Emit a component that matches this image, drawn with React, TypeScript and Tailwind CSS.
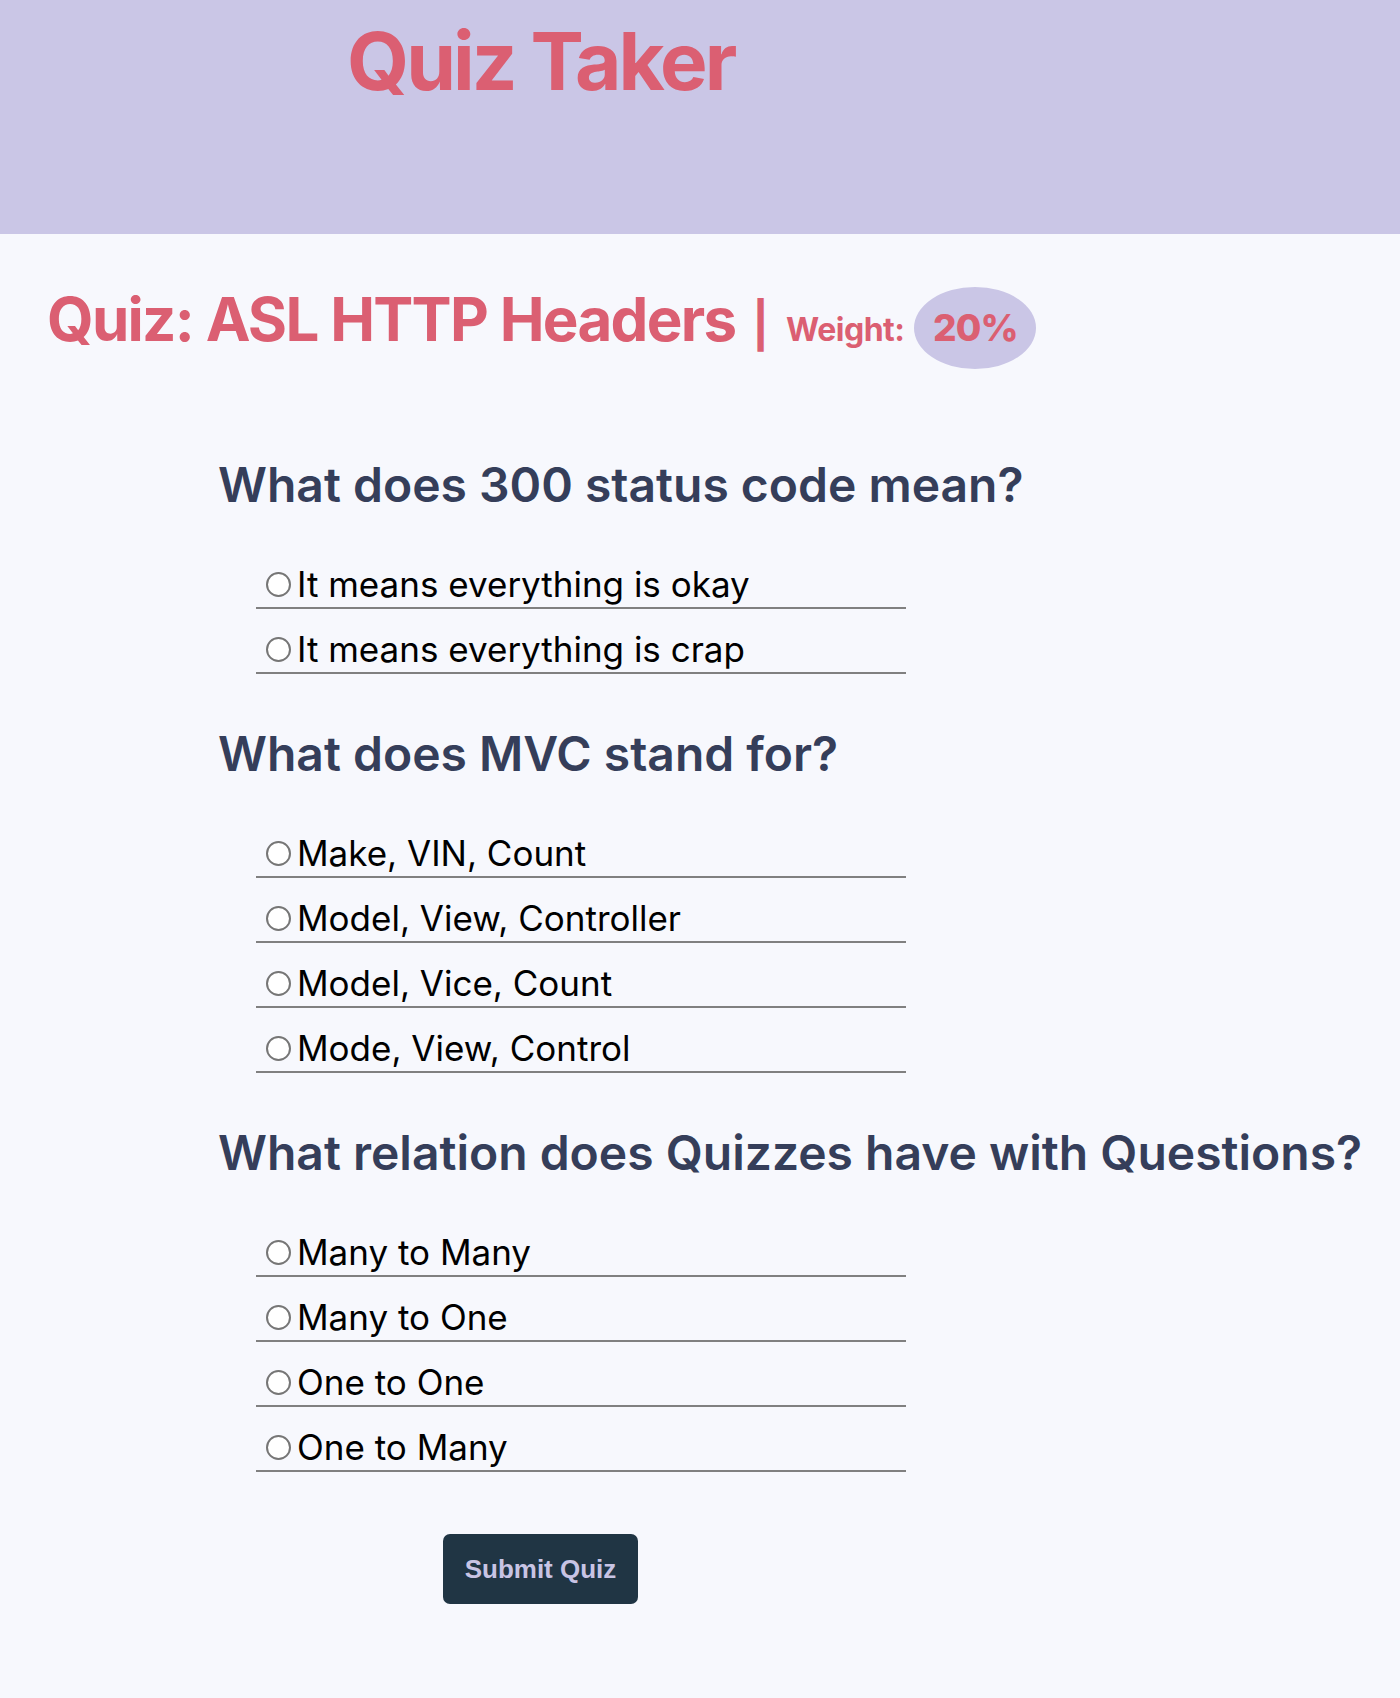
import React from "react";

const questions = [
  {
    q: "What does 300 status code mean?",
    options: ["It means everything is okay", "It means everything is crap"],
  },
  {
    q: "What does MVC stand for?",
    options: [
      "Make, VIN, Count",
      "Model, View, Controller",
      "Model, Vice, Count",
      "Mode, View, Control",
    ],
  },
  {
    q: "What relation does Quizzes have with Questions?",
    options: ["Many to Many", "Many to One", "One to One", "One to Many"],
  },
];

export default function App() {
  return (
    <div className="min-h-[1698px] bg-[#f7f8fd] font-['Inter',sans-serif]">
      <header className="h-[234px] bg-[#cac6e6] pl-[347px] pt-[21px]">
        <h1 className="text-[80px] leading-none font-bold tracking-[-3px] text-[#db5f72]">Quiz Taker</h1>
      </header>

      <div className="pl-[47px] pt-[53px] flex items-baseline text-[#db5f72]">
        <h2 className="text-[60px] leading-none font-bold tracking-[-1.7px]">Quiz: ASL HTTP Headers</h2>
        <span className="ml-[17px] text-[45px] font-bold">|</span>
        <span className="ml-[17px] text-[32px] font-bold tracking-[-0.5px]">Weight:</span>
        <span className="ml-[10px] w-[122px] h-[82px] rounded-[50%] bg-[#cac6e6] flex items-center justify-center text-[37px] font-extrabold tracking-[-0.8px]">
          20%
        </span>
      </div>

      <div className="pl-[218px] pt-[92px] flex flex-col gap-[56px]">
        {questions.map((item, qi) => (
          <div key={qi} className="flex flex-col">
            <h3 className="text-[48px] leading-none font-semibold text-[#353e5a]">{item.q}</h3>
            <div className="mt-[57px] pl-[38px] flex flex-col gap-[22px]">
              {item.options.map((o, oi) => (
                <label
                  key={oi}
                  className="flex w-[650px] items-start border-b-2 border-[#808080] pl-[10px] pb-[4px] text-[35px] leading-[37px] text-black"
                >
                  <span className="mt-[6px] mr-[6px] inline-block h-[25px] w-[25px] shrink-0 rounded-full border-2 border-[#767676] bg-white" />
                  <span>{o}</span>
                </label>
              ))}
            </div>
          </div>
        ))}
      </div>

      <div className="pl-[443px] pt-[62px]">
        <button className="h-[70px] w-[195px] rounded-[7px] bg-[#203544] font-['Liberation_Sans',Arial,sans-serif] text-[26px] font-bold text-[#c8c4e4]">
          Submit Quiz
        </button>
      </div>
    </div>
  );
}
